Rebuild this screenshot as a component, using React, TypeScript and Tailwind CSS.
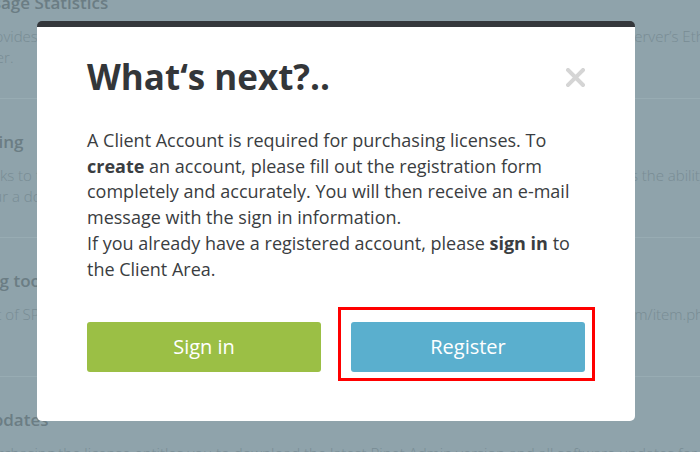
import React from 'react';

const features = [
  {
    title: 'Usage Statistics',
    lines: [
      'Provides detailed statistics on bandwidth consumption and incoming traffic passing through the server\u2019s Ethernet interfaces',
      'user.',
    ],
    pb: 'pb-[30px]',
  },
  {
    title: 'Filing',
    lines: [
      'Links to the accounting system give the administrator a simple way to charge their users and gives the ability to export',
      'four a dozen formats.',
    ],
    pb: 'pb-[30px]',
  },
  {
    title: 'Log tools',
    lines: ['Set of SPAN ports and mirrored interfaces are published on the product page at www.example.com/item.php?id=32'],
    pb: 'pb-[51px]',
  },
  {
    title: 'Updates',
    lines: [
      'Purchasing the license entitles you to download the latest Pinet Admin version and all software updates for free',
    ],
    pb: 'pb-[30px]',
  },
];

const Backdrop: React.FC = () => (
  <div className="-mt-[40px] -ml-[20px] w-[800px]">
    {features.map((f) => (
      <div key={f.title} className={`border-b border-[#98acb3] pt-[31px] ${f.pb}`}>
        <h3 className="text-[17px] leading-[24px] font-semibold text-[#6b7d84]">{f.title}</h3>
        <div className="mt-[11px] text-[15px] leading-[21px] font-light text-[#788c94]">
          {f.lines.map((l) => (
            <p key={l} className="whitespace-nowrap">{l}</p>
          ))}
        </div>
      </div>
    ))}
  </div>
);

export default function App() {
  return (
    <div className="relative h-[452px] w-[700px] overflow-hidden bg-[#8fa3ab] font-['Open_Sans',sans-serif]">
      <Backdrop />

      {/* modal */}
      <div className="absolute left-[37px] top-[21px] w-[598px] rounded-[5px] border-t-[6px] border-[#34373b] bg-white px-[50px] pt-[30px] pb-[49px]">
        <div className="flex items-center justify-between">
          <h2 className="text-[35px] leading-[40px] font-bold text-[#333639]">What‘s next?..</h2>
          <button className="flex h-[20px] w-[20px] items-center justify-center">
            <svg width="19" height="19" viewBox="0 0 19 19">
              <path d="M2 2 L17 17 M17 2 L2 17" stroke="#d5d5d5" strokeWidth="4" strokeLinecap="square" />
            </svg>
          </button>
        </div>

        <div className="mt-[31px] text-[18px] leading-[1.428571] text-[#3a3d41]">
          <p>
            A Client Account is required for purchasing licenses. To <b className="font-bold">create</b> an
            account, please fill out the registration form completely and accurately. You will then receive an
            e-mail message with the sign in information.
          </p>
          <p>
            If you already have a registered account, please <b className="font-bold">sign in</b> to the Client
            Area.
          </p>
        </div>

        <div className="mt-[40px] grid grid-cols-2 gap-[30px]">
          <button className="h-[50px] rounded-[3px] bg-[#9bbf45] text-[20px] text-white">Sign in</button>
          <div className="relative">
            <div className="absolute -left-[13px] -top-[15px] -right-[10px] -bottom-[9px] border-[3px] border-[#ff0000]" />
            <button className="relative h-[50px] w-full rounded-[3px] bg-[#5aafce] text-[20px] text-white">
              Register
            </button>
          </div>
        </div>
      </div>
    </div>
  );
}
